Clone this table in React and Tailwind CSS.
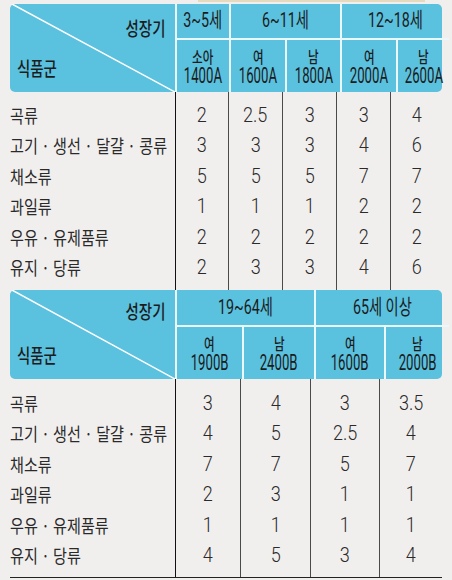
const KO = { fontFamily: '"Noto Sans CJK KR", "Noto Sans", sans-serif' };
const NUM = { fontFamily: 'Roboto, "Noto Sans CJK KR", sans-serif' };

const FOODS = ['곡류', '고기 · 생선 · 달걀 · 콩류', '채소류', '과일류', '우유 · 유제품류', '유지 · 당류'];

const T1 = [
  [2, 2.5, 3, 3, 4],
  [3, 3, 3, 4, 6],
  [5, 5, 5, 7, 7],
  [1, 1, 1, 2, 2],
  [2, 2, 2, 2, 2],
  [2, 3, 3, 4, 6],
];

const T2 = [
  [3, 4, 3, 3.5],
  [4, 5, 2.5, 4],
  [7, 7, 5, 7],
  [2, 3, 1, 1],
  [1, 1, 1, 1],
  [4, 5, 3, 4],
];

function Corner({ top, bottom }) {
  return (
    <div className={`row-span-2 relative flex flex-col justify-between ${top} ${bottom}`}>
      <svg className="absolute inset-0 w-full h-full" preserveAspectRatio="none">
        <line x1="2" y1="0" x2="100%" y2="100%" stroke="#ffffff" strokeWidth="1.5" />
      </svg>
      <div className="relative self-end pr-[10px] h-[20px] leading-[20px] text-[19px] font-medium text-[#1c1c1c]" style={KO}>
        <span className="inline-block scale-x-[0.76] origin-right">성장기</span>
      </div>
      <div className="relative pl-[7px] h-[20px] leading-[20px] text-[19px] font-medium text-[#1c1c1c]" style={KO}>
        <span className="inline-block scale-x-[0.76] origin-left">식품군</span>
      </div>
    </div>
  );
}

function Age({ label, span }) {
  return (
    <div className={`${span} border-l-2 border-[#eaf7fb] flex items-center justify-center text-[21px] text-[#1c1c1c] whitespace-nowrap`} style={NUM}>
      <span className="inline-block scale-x-[0.68]">{label}</span>
    </div>
  );
}

function Sub({ sex, kcal }) {
  return (
    <div className="border-l-2 border-t-2 border-[#eaf7fb] flex flex-col items-center justify-center gap-[1px] text-[#1c1c1c] whitespace-nowrap">
      <span className="inline-block h-[18px] scale-x-[0.72] text-[16px] leading-[18px] font-medium" style={KO}>{sex}</span>
      <span className="inline-block h-[19px] scale-x-[0.6] text-[22px] leading-[19px]" style={NUM}>{kcal}</span>
    </div>
  );
}

function Body({ data, widths, pad }) {
  return (
    <div className="flex h-[198px]">
      <div className={`w-[165px] ${pad}`}>
        {FOODS.map(f => (
          <div key={f} className="h-[30.5px] flex items-center text-[18px] text-[#2a2a2a] whitespace-nowrap" style={KO}>
            <span className="inline-block scale-x-[0.84] origin-left">{f}</span>
          </div>
        ))}
      </div>
      {widths.map((w, ci) => (
        <div key={ci} className={`${w} ${pad} border-l ${ci === 0 ? 'border-[#111]' : 'border-[#4a4a4a]'}`}>
          {data.map((r, ri) => (
            <div key={ri} className="h-[30.5px] flex items-center justify-center text-[21px] font-light text-[#2a2a2a]" style={NUM}>
              <span className="inline-block scale-x-[0.86]">{r[ci]}</span>
            </div>
          ))}
        </div>
      ))}
    </div>
  );
}

export default function App() {
  return (
    <div className="w-[452px] h-[580px] bg-[#f1efee] overflow-hidden">
      <div className="ml-[198px] w-[227px] h-[2px] bg-[#e3dac0]" />
      <div className="px-[10px] pt-[2px] w-[452px]">
        {/* 표 1 */}
        <div className="grid grid-cols-[165px_54px_56px_55px_56px_53px] grid-rows-[34px_54px] h-[88px] bg-[#5ac1df] rounded-[5px]">
          <Corner top="pt-[14px]" bottom="pb-[14px]" />
          <Age label="3~5세" span="" />
          <Age label="6~11세" span="col-span-2" />
          <Age label="12~18세" span="col-span-2" />
          <Sub sex="소아" kcal="1400A" />
          <Sub sex="여" kcal="1600A" />
          <Sub sex="남" kcal="1800A" />
          <Sub sex="여" kcal="2000A" />
          <Sub sex="남" kcal="2600A" />
        </div>
        <Body data={T1} widths={['w-[54px]', 'w-[56px]', 'w-[55px]', 'w-[56px]', 'w-[53px]']} pad="pt-[8px]" />

        {/* 표 2 */}
        <div className="grid grid-cols-[165px_67px_72px_70px_65px] grid-rows-[35px_54px] h-[89px] bg-[#5ac1df] rounded-[5px]">
          <Corner top="pt-[11px]" bottom="pb-[14px]" />
          <Age label="19~64세" span="col-span-2" />
          <Age label="65세 이상" span="col-span-2" />
          <Sub sex="여" kcal="1900B" />
          <Sub sex="남" kcal="2400B" />
          <Sub sex="여" kcal="1600B" />
          <Sub sex="남" kcal="2000B" />
        </div>
        <Body data={T2} widths={['w-[67px]', 'w-[72px]', 'w-[70px]', 'w-[65px]']} pad="pt-[9px]" />
        <div className="h-px bg-[#222]" />
      </div>
    </div>
  );
}
